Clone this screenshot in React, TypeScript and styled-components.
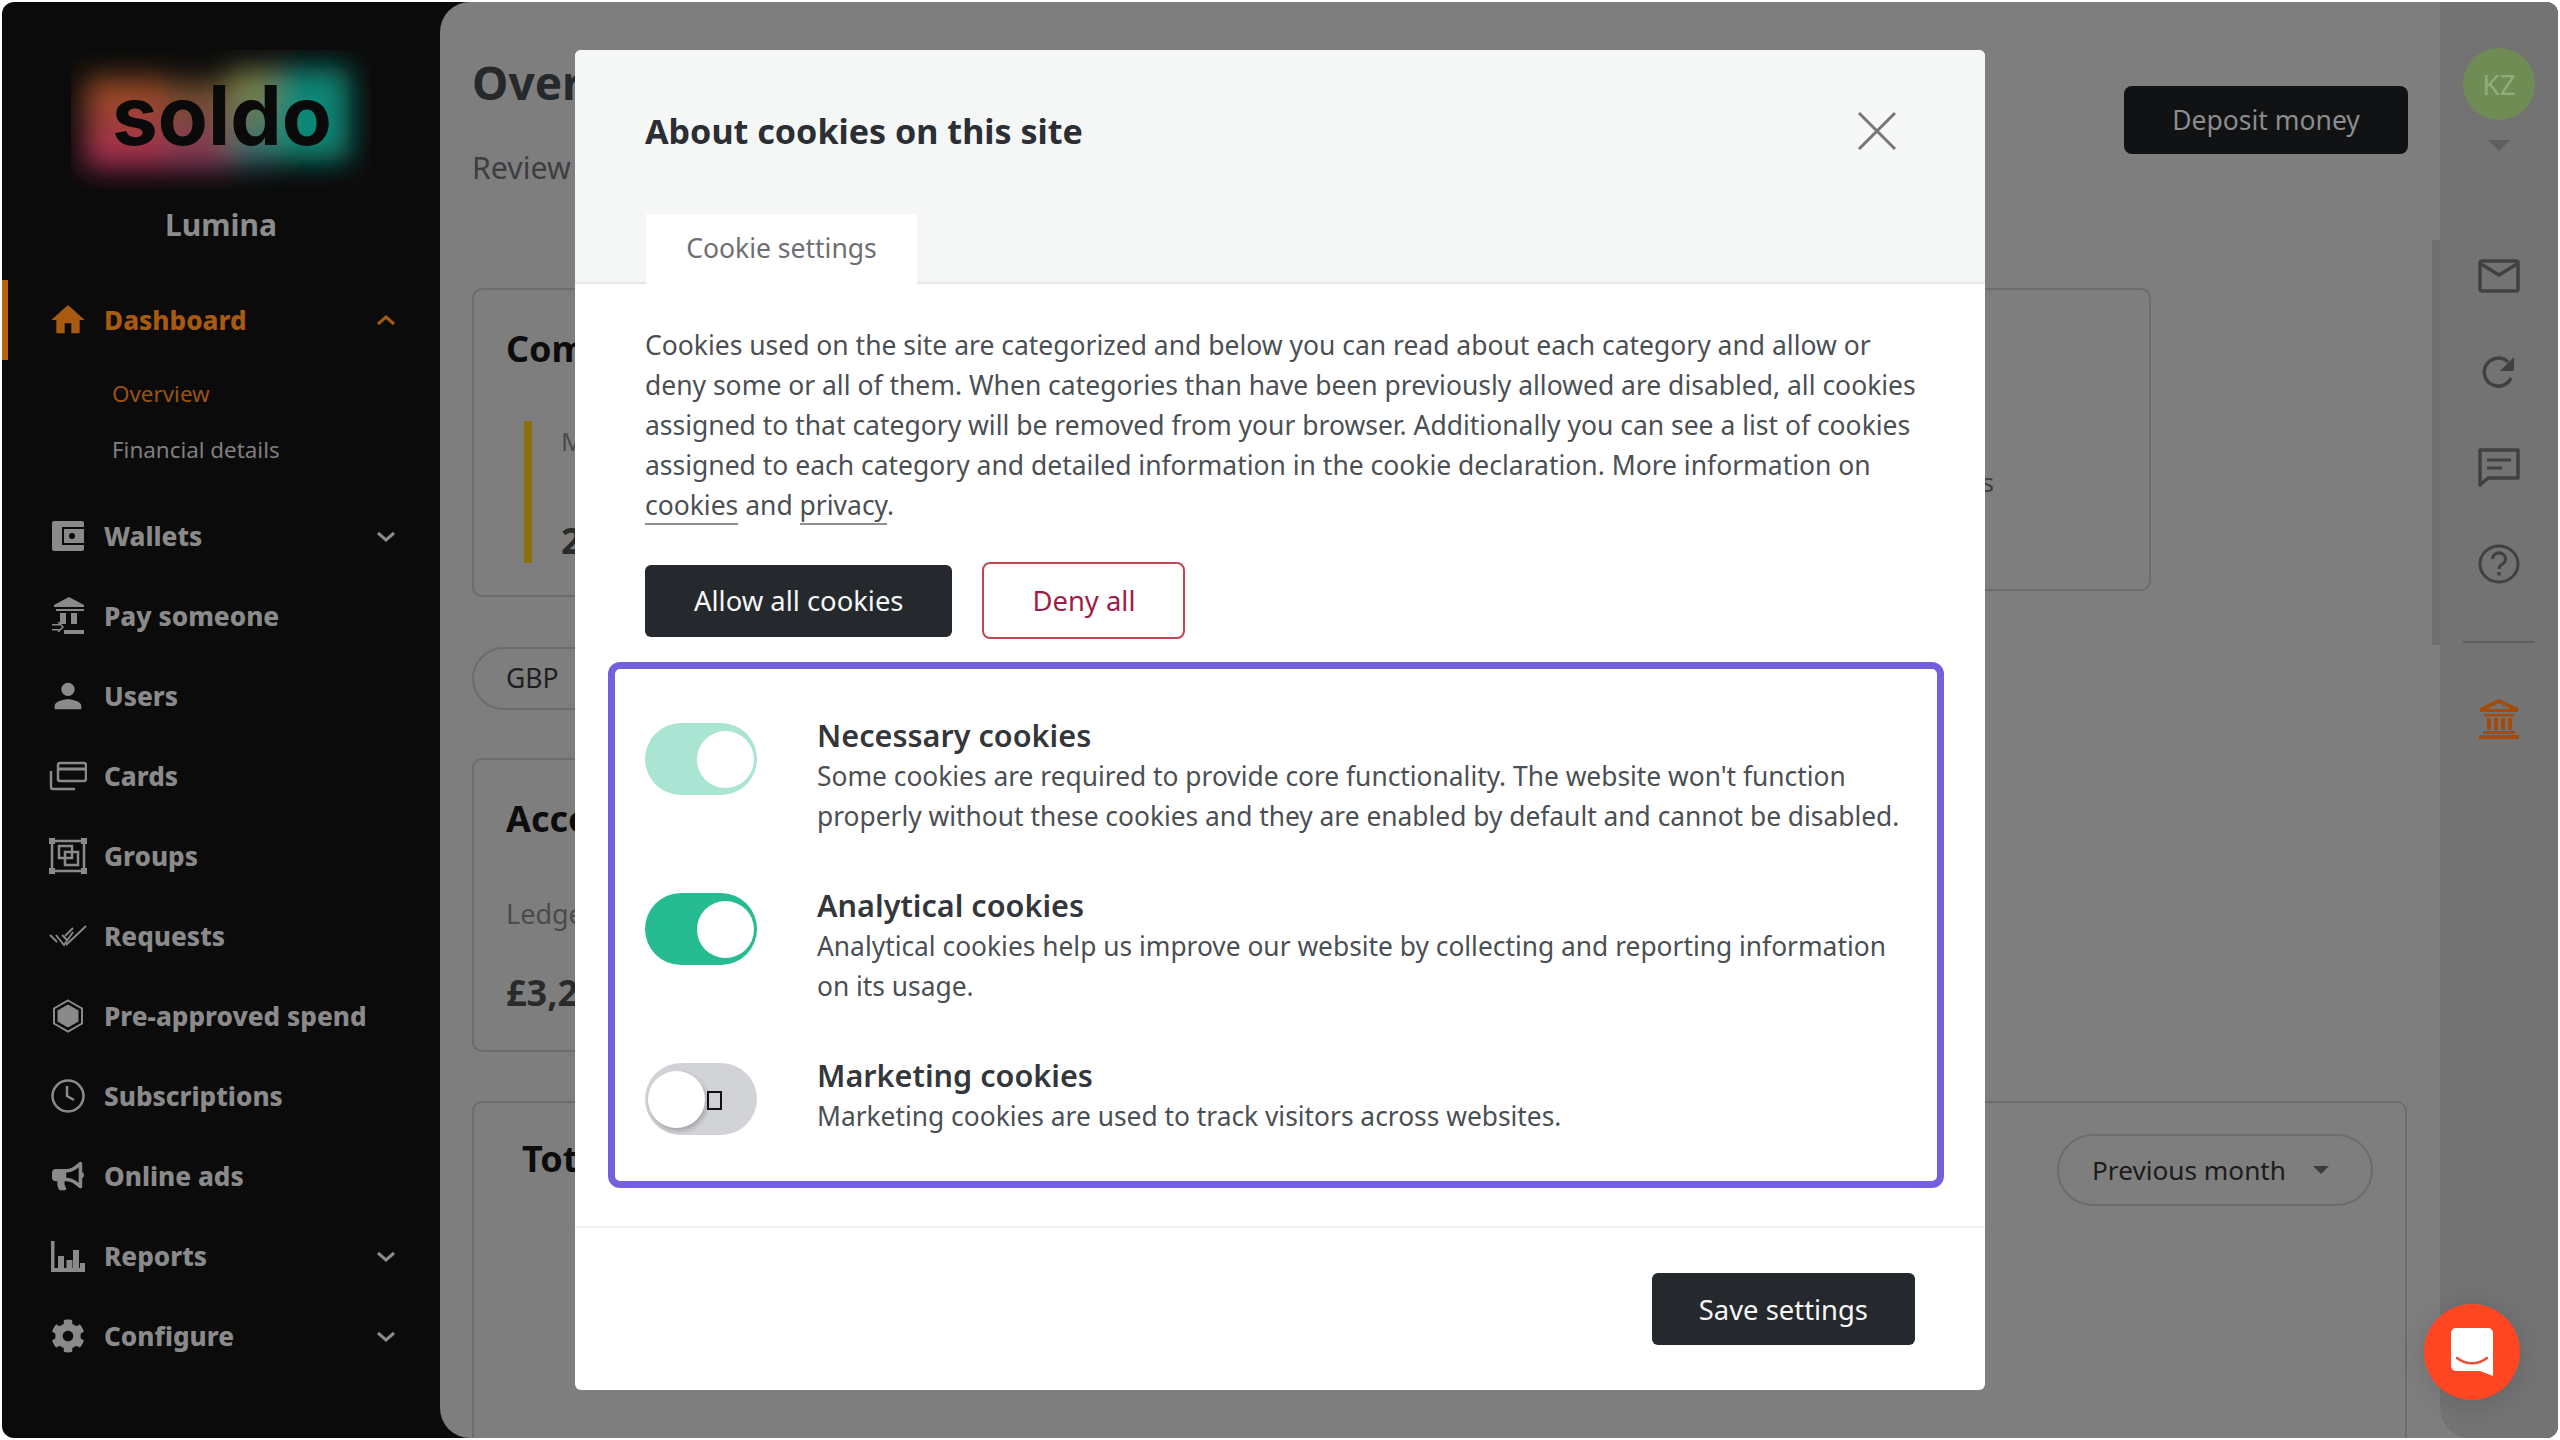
import React from 'react';
import styled, { createGlobalStyle } from 'styled-components';
import { MdHome, MdPerson } from 'react-icons/md';
import { FaBullhorn, FaCog } from 'react-icons/fa';

const GlobalStyle = createGlobalStyle`
  html, body { margin: 0; padding: 0; background: #fff; }
  * { box-sizing: border-box; }
  body { font-family: "Noto Sans", "Open Sans", sans-serif; }
`;

const Frame = styled.div`
  position: relative;
  display: flex;
  height: 1436px;
  width: 2556px;
  margin: 2px;
  border-radius: 12px;
  overflow: hidden;
  background: #0b0b0b;
`;

/* sidebar */
const Sidebar = styled.aside`
  width: 438px;
  flex: none;
  color: #8a8a8a;
`;

const Brand = styled.div`
  height: 278px;
  padding-top: 48px;
  display: flex;
  flex-direction: column;
  align-items: center;
`;

const Company = styled.div`
  margin-top: 15px;
  font-size: 30px;
  font-weight: 700;
  line-height: 40px;
  color: #8c8c8c;
`;

const NavRow = styled.div<{ $active?: boolean }>`
  height: 80px;
  display: flex;
  align-items: center;
  padding-left: 46px;
  font-size: 26.1px;
  font-weight: 800;
  color: ${({ $active }) => ($active ? '#a85a10' : '#8a8a8a')};
  border-left: 6px solid ${({ $active }) => ($active ? '#b5640f' : 'transparent')};
  border-radius: 0 5px 5px 0;
`;

const NavIcon = styled.span`
  width: 40px;
  height: 40px;
  flex: none;
  display: flex;
  align-items: center;
  justify-content: center;
  margin-left: -6px;
  margin-right: 16px;
  svg { display: block; }
`;

const NavLabel = styled.span`
  flex: 1;
`;

const Chevron = styled.svg`
  width: 24px;
  height: 24px;
  margin-right: 42px;
`;

const SubMenu = styled.div`
  padding: 6px 0 18px 110px;
`;

const SubItem = styled.div<{ $active?: boolean }>`
  height: 56px;
  line-height: 55px;
  font-size: 22.4px;
  color: ${({ $active }) => ($active ? '#9a5214' : '#7f7f7f')};
`;

/* main column */
const Workspace = styled.div`
  flex: 1;
  min-width: 0;
  display: flex;
  background: #7e7e7e;
  border-radius: 30px 0 0 30px;
`;

const Main = styled.main`
  flex: 1;
  min-width: 0;
  position: relative;
  padding: 50px 33px 0 32px;
`;

const PageHead = styled.header`
  display: flex;
  justify-content: space-between;
  height: 236px;
`;

const PageTitle = styled.h1`
  margin: 0;
  font-size: 46px;
  line-height: 60px;
  font-weight: 700;
  color: #26292c;
`;

const PageSub = styled.p`
  margin: 36px 0 0;
  font-size: 30.3px;
  line-height: 40px;
  color: #3c3f42;
`;

const DepositButton = styled.button`
  width: 284px;
  height: 68px;
  margin: 34px -1px 0 0;
  border: 0;
  border-radius: 8px;
  background: #101214;
  color: #8c8c8c;
  font: 400 26.5px "Noto Sans", sans-serif;
`;

const CardRow = styled.div`
  display: flex;
  align-items: flex-start;
  width: 1679px;
  gap: 30px;
`;

const Card = styled.section`
  border: 2px solid #6c6c6c;
  border-radius: 10px;
  padding: 0 32px;
`;

const CompanyCard = styled(Card)`
  width: 900px;
  height: 309px;
  padding-top: 34px;
`;

const SideCard = styled(Card)`
  flex: 1;
  height: 303px;
  padding: 172px 155px 0 0;
  text-align: right;
  font-size: 26px;
  line-height: 40px;
  color: #3c3f42;
`;

const CardTitle = styled.h2`
  margin: 0;
  font-size: 36px;
  line-height: 50px;
  font-weight: 700;
  color: #0c0c0c;
`;

const Metric = styled.div`
  display: flex;
  gap: 29px;
  margin: 47px 0 0 18px;
`;

const MetricBar = styled.div`
  width: 8px;
  height: 142px;
  background: #8a7010;
`;

const MetricLabel = styled.div`
  font-size: 26px;
  line-height: 40px;
  color: #4b4b4b;
`;

const MetricValue = styled.div`
  margin-top: 55px;
  font-size: 36px;
  line-height: 50px;
  font-weight: 700;
  color: #2a2a2a;
`;

const CurrencyPill = styled.div`
  width: 220px;
  height: 63px;
  margin-top: 50px;
  padding-left: 32px;
  border: 2px solid #6c6c6c;
  border-radius: 32px;
  font-size: 26.5px;
  line-height: 58px;
  color: #1f1f1f;
`;

const AccountCard = styled(Card)`
  width: 900px;
  height: 294px;
  margin-top: 48px;
  padding-top: 34px;
`;

const LedgerLabel = styled.div`
  margin-top: 50px;
  font-size: 27px;
  line-height: 40px;
  color: #4b4b4b;
`;

const LedgerValue = styled.div`
  margin-top: 34px;
  font-size: 36px;
  line-height: 50px;
  font-weight: 700;
  color: #2a2a2a;
`;

const TotalCard = styled(Card)`
  height: 400px;
  margin-top: 49px;
  padding: 31px 32px 0 48px;
  display: flex;
  justify-content: space-between;
  align-items: flex-start;
`;

const MonthPill = styled.div`
  display: flex;
  align-items: center;
  gap: 27px;
  height: 72px;
  width: 316px;
  padding-left: 33px;
  border: 2px solid #6c6c6c;
  border-radius: 36px;
  font-size: 26.2px;
  color: #1c1c1c;
`;

const Caret = styled.span<{ $color?: string; $size?: number }>`
  display: block;
  width: 0;
  height: 0;
  border-left: ${({ $size }) => $size || 8}px solid transparent;
  border-right: ${({ $size }) => $size || 8}px solid transparent;
  border-top: ${({ $size }) => $size || 8}px solid ${({ $color }) => $color || '#3c3c3c'};
`;

const ScrollThumb = styled.div`
  position: absolute;
  right: 0;
  top: 238px;
  width: 8px;
  height: 405px;
  background: #6f6f6f;
`;

/* right rail */
const Rail = styled.aside`
  width: 118px;
  flex: none;
  background: #737373;
  border-bottom-left-radius: 30px;
  padding-top: 46px;
  display: flex;
  flex-direction: column;
  align-items: center;
`;

const Avatar = styled.div`
  width: 72px;
  height: 72px;
  border-radius: 50%;
  background: #6f8c55;
  color: #93ab7d;
  font-size: 28px;
  line-height: 72px;
  text-align: center;
`;

const AvatarCaret = styled.div`
  margin: 20px 0 77px;
`;

const RailButton = styled.div`
  height: 96px;
  display: flex;
  align-items: center;
  justify-content: center;
  color: #414141;
`;

const RailDivider = styled.div`
  width: 72px;
  height: 2px;
  margin: 29px 0 28px;
  background: #5e5e5e;
`;

const ChatBubble = styled.div`
  position: absolute;
  right: 38px;
  bottom: 38px;
  width: 96px;
  height: 96px;
  border-radius: 50%;
  background: #ff4521;
  box-shadow: 0 4px 24px rgba(0, 0, 0, 0.12);
  display: flex;
  align-items: center;
  justify-content: center;
`;

/* cookie dialog */
const Overlay = styled.div`
  position: absolute;
  inset: 0;
  display: flex;
  align-items: center;
  justify-content: center;
`;

const Modal = styled.div`
  width: 1410px;
  height: 1340px;
  background: #fff;
  border-radius: 6px;
  color: #4a4f54;
`;

const ModalHead = styled.div`
  height: 234px;
  padding: 0 70px;
  background: #f5f6f6;
  border-bottom: 2px solid #e6e7e8;
  border-radius: 6px 6px 0 0;
  display: flex;
  flex-direction: column;
  justify-content: space-between;
`;

const TitleRow = styled.div`
  display: flex;
  justify-content: space-between;
  align-items: center;
  height: 162px;
  padding-right: 18px;
`;

const ModalTitle = styled.h2`
  margin: 0;
  font-size: 34.1px;
  font-weight: 700;
  color: #2b2f33;
`;

const Tab = styled.div`
  width: 271px;
  height: 70px;
  margin: 0 0 -2px 1px;
  background: #fff;
  font-size: 26.5px;
  line-height: 69px;
  text-align: center;
  color: #6c6f73;
`;

const ModalBody = styled.div`
  padding: 41px 70px 38px;
  border-bottom: 2px solid #eeeff0;
`;

const Intro = styled.p`
  margin: 0 -20px 0 0;
  font-size: 26.47px;
  line-height: 40px;
`;

const IntroLink = styled.a`
  color: inherit;
  text-decoration: none;
  border-bottom: 2px solid #8f8f8f;
`;

const ActionRow = styled.div`
  display: flex;
  align-items: center;
  gap: 30px;
  margin-top: 37px;
`;

const DarkButton = styled.button<{ $pad?: number }>`
  height: 72px;
  padding: 0 ${({ $pad }) => $pad || 47}px;
  border: 0;
  border-radius: 6px;
  background: #25292d;
  color: #f6f6f6;
  font: 400 27.4px "Noto Sans", sans-serif;
`;

const OutlineButton = styled.button`
  height: 77px;
  padding: 0 48px;
  border: 2px solid #c0474f;
  border-radius: 8px;
  background: #fff;
  color: #a01c44;
  font: 400 27.4px "Noto Sans", sans-serif;
`;

const CategoryBox = styled.div`
  width: 1336px;
  margin: 23px 0 0 -37px;
  padding: 46px 20px 45px 30px;
  border: 7px solid #7360dd;
  border-radius: 12px;
  display: flex;
  flex-direction: column;
  gap: 49px;
`;

const CategoryRow = styled.div`
  display: flex;
  gap: 60px;
`;

const Toggle = styled.div<{ $color: string; $on: boolean }>`
  width: 112px;
  height: 72px;
  flex: none;
  margin-top: 8px;
  padding: 0 3px;
  border-radius: 36px;
  background: ${({ $color }) => $color};
  display: flex;
  align-items: center;
  justify-content: ${({ $on }) => ($on ? 'flex-end' : 'flex-start')};
`;

const Knob = styled.div<{ $raised?: boolean }>`
  width: 57px;
  height: 57px;
  border-radius: 50%;
  background: #fff;
  box-shadow: ${({ $raised }) => ($raised ? '2px 3px 5px rgba(0, 0, 0, 0.22)' : 'none')};
`;

const MissingGlyph = styled.span`
  width: 15px;
  height: 19px;
  margin: 3px 0 0 2px;
  border: 2px solid #111;
`;

const CategoryName = styled.div`
  font-size: 30.6px;
  line-height: 40px;
  font-weight: 600;
  color: #33373b;
`;

const CategoryText = styled.div`
  font-size: 26.35px;
  line-height: 40px;
  padding-top: 1px;
`;

const ModalFoot = styled.div`
  height: 162px;
  padding: 0 70px;
  display: flex;
  align-items: center;
  justify-content: flex-end;
`;

const CloseIcon = styled.svg`
  width: 40px;
  height: 40px;
  color: #777;
`;

/* drawn icons */
const WalletIcon = () => (
  <svg width="34" height="32" viewBox="0 0 34 32">
    <rect x="1" y="1" width="32" height="30" rx="2" fill="currentColor" />
    <path d="M33 8H12v16h21" fill="none" stroke="#0b0b0b" strokeWidth="2" />
    <circle cx="21" cy="16" r="3" fill="#0b0b0b" />
  </svg>
);

const PayIcon = () => (
  <svg width="36" height="38" viewBox="0 0 36 38" fill="currentColor">
    <path d="M19 0l15 8v2H4V8z" />
    <path d="M6 12h28v2H6zM10 16h6v11h-6zM21 16h6v11h-6zM14 33h20v4H14z" />
    <path d="M2 27h8v1.500H2zM2 32h8v1.500H2z" />
    <path d="M8 25l5 5-5 5" fill="none" stroke="currentColor" strokeWidth="1.500" />
  </svg>
);

const CardsIcon = () => (
  <svg width="38" height="30" viewBox="0 0 38 30" fill="none" stroke="currentColor" strokeWidth="2.500">
    <rect x="9" y="2" width="28" height="18" rx="2" />
    <path d="M9 8h28" strokeWidth="3" />
    <path d="M2 10v16a2 2 0 0 0 2 2h22" />
  </svg>
);

const GroupsIcon = () => (
  <svg width="38" height="36" viewBox="0 0 38 36" fill="none" stroke="currentColor" strokeWidth="2.500">
    <rect x="3" y="3" width="32" height="30" />
    <rect x="10" y="8" width="13" height="12" />
    <rect x="16" y="14" width="13" height="13" />
    <g fill="currentColor" stroke="none">
      <rect x="0" y="0" width="6" height="6" />
      <rect x="32" y="0" width="6" height="6" />
      <rect x="0" y="30" width="6" height="6" />
      <rect x="32" y="30" width="6" height="6" />
    </g>
  </svg>
);

const RequestsIcon = () => (
  <svg width="38" height="24" viewBox="0 0 38 24" fill="none" stroke="currentColor" strokeWidth="1.800">
    <path d="M1 11l7 7" />
    <path d="M7 11l8 10 9-13" />
    <path d="M13 11l5 5M17 21L37 2M24 4l-8 8" />
  </svg>
);

const HexagonIcon = () => (
  <svg width="32" height="34" viewBox="0 0 32 34">
    <path d="M16 1.500l14 8v15l-14 8-14-8v-15z" fill="none" stroke="currentColor" strokeWidth="2" />
    <path d="M16 5.500l10.500 6v11L16 28.500l-10.500-6v-11z" fill="currentColor" />
  </svg>
);

const ClockIcon = () => (
  <svg width="36" height="36" viewBox="0 0 36 36" fill="none" stroke="currentColor" strokeWidth="2.500">
    <circle cx="18" cy="18" r="15.500" />
    <path d="M17 8v10l7 4" />
  </svg>
);

const ChartIcon = () => (
  <svg width="34" height="31" viewBox="0 0 34 31" fill="currentColor">
    <path d="M0 0h3.500v27H34v4H0z" />
    <path d="M7 15h6v12H7zM15.500 19h6v8h-6zM22 9h6v18h-6zM29 22h5v5h-5z" />
  </svg>
);

const MailIcon = () => (
  <svg width="42" height="34" viewBox="0 0 42 34" fill="none" stroke="currentColor" strokeWidth="3.500" strokeLinejoin="round">
    <rect x="2" y="2" width="38" height="30" rx="2" />
    <path d="M3 5l18 11L39 5" />
  </svg>
);

const RefreshIcon = () => (
  <svg width="36" height="36" viewBox="0 0 36 36">
    <path d="M30 24a14 14 0 1 1-3-16" fill="none" stroke="currentColor" strokeWidth="3.500" />
    <path d="M33 3v14H19z" fill="currentColor" />
  </svg>
);

const MessageIcon = () => (
  <svg width="42" height="40" viewBox="0 0 42 40" fill="none" stroke="currentColor" strokeWidth="3.500" strokeLinejoin="round">
    <path d="M2 2h38v28H10l-8 7z" />
    <path d="M9 12h24M9 20h15" strokeWidth="3" />
  </svg>
);

const HelpIcon = () => (
  <svg width="42" height="40" viewBox="0 0 42 40" fill="none" stroke="currentColor" strokeWidth="3">
    <ellipse cx="21" cy="20" rx="19" ry="18" />
    <path d="M14.500 15a6.500 6 0 1 1 10 5c-2.500 1.500-3.500 3-3.500 5" strokeWidth="3" />
    <path d="M21 28v3.500" strokeWidth="3.500" />
  </svg>
);

const BankIcon = () => (
  <svg width="42" height="40" viewBox="0 0 42 40" fill="#a64a0a">
    <path d="M21 0L40 9v4H2V9zM21 4L9 10h24z" fillRule="evenodd" />
    <path d="M6 15h30v2.500H6zM9 19h4v12H9zM16 19h4v12h-4zM23 19h4v12h-4zM30 19h4v12h-4zM5 32h32v3H5zM1 36h40v4H1z" />
  </svg>
);

const ChatGlyph = () => (
  <svg width="44" height="50" viewBox="0 0 44 50">
    <path d="M6 1h32a5 5 0 0 1 5 5v43l-13-5H6a5 5 0 0 1-5-5V6a5 5 0 0 1 5-5z" fill="#fff" />
    <path d="M7 31c9 7 21 7 30 0" fill="none" stroke="#e4503a" strokeWidth="2.500" strokeLinecap="round" />
  </svg>
);

const SoldoLogo = () => (
  <svg width="300" height="140" viewBox="0 0 300 140">
    <defs>
      <filter id="glow" x="-30%" y="-30%" width="160%" height="160%">
        <feGaussianBlur stdDeviation="14" />
      </filter>
      <linearGradient id="c1" x1="0" y1="0" x2="0" y2="1">
        <stop offset="0" stopColor="#96501c" />
        <stop offset="1" stopColor="#a82a58" />
      </linearGradient>
      <linearGradient id="c2" x1="0" y1="0" x2="0" y2="1">
        <stop offset="0" stopColor="#6e5226" />
        <stop offset="1" stopColor="#8c3560" />
      </linearGradient>
      <linearGradient id="c3" x1="0" y1="0" x2="0" y2="1">
        <stop offset="0" stopColor="#85853f" />
        <stop offset="1" stopColor="#2f6a78" />
      </linearGradient>
      <linearGradient id="c4" x1="0" y1="0" x2="0" y2="1">
        <stop offset="0" stopColor="#0a8574" />
        <stop offset="1" stopColor="#0c8a78" />
      </linearGradient>
    </defs>
    <g filter="url(#glow)">
      <rect x="14" y="28" width="80" height="90" fill="url(#c1)" />
      <rect x="94" y="32" width="64" height="86" fill="url(#c2)" />
      <rect x="158" y="20" width="46" height="94" fill="url(#c3)" />
      <rect x="204" y="18" width="74" height="92" fill="url(#c4)" />
    </g>
    <text x="41" y="95" textLength="220" lengthAdjust="spacingAndGlyphs" fontFamily="Inter, sans-serif" fontWeight="700" fontSize="82" fill="#0a0a0a">
      soldo
    </text>
  </svg>
);

const ChevronIcon = ({ up }: { up?: boolean }) => (
  <Chevron viewBox="0 0 24 24" fill="none" stroke="currentColor" strokeWidth="3">
    <path d={up ? 'M4 16l8-7 8 7' : 'M4 9l8 7 8-7'} />
  </Chevron>
);

const navItems = [
  { label: 'Wallets', icon: <WalletIcon />, more: true },
  { label: 'Pay someone', icon: <PayIcon /> },
  { label: 'Users', icon: <MdPerson size={40} /> },
  { label: 'Cards', icon: <CardsIcon /> },
  { label: 'Groups', icon: <GroupsIcon /> },
  { label: 'Requests', icon: <RequestsIcon /> },
  { label: 'Pre-approved spend', icon: <HexagonIcon /> },
  { label: 'Subscriptions', icon: <ClockIcon /> },
  { label: 'Online ads', icon: <FaBullhorn size={32} /> },
  { label: 'Reports', icon: <ChartIcon />, more: true },
  { label: 'Configure', icon: <FaCog size={34} />, more: true },
];

const categories = [
  {
    name: 'Necessary cookies',
    text: "Some cookies are required to provide core functionality. The website won't function properly without these cookies and they are enabled by default and cannot be disabled.",
    color: '#aae5d3',
    on: true,
  },
  {
    name: 'Analytical cookies',
    text: 'Analytical cookies help us improve our website by collecting and reporting information on its usage.',
    color: '#26bb91',
    on: true,
  },
  {
    name: 'Marketing cookies',
    text: 'Marketing cookies are used to track visitors across websites.',
    color: '#d2d3d7',
    on: false,
  },
];

export default function App() {
  return (
    <Frame>
      <GlobalStyle />
      <Sidebar>
        <Brand>
          <SoldoLogo />
          <Company>Lumina</Company>
        </Brand>
        <NavRow $active>
          <NavIcon>
            <MdHome size={42} />
          </NavIcon>
          <NavLabel>Dashboard</NavLabel>
          <ChevronIcon up />
        </NavRow>
        <SubMenu>
          <SubItem $active>Overview</SubItem>
          <SubItem>Financial details</SubItem>
        </SubMenu>
        {navItems.map(item => (
          <NavRow key={item.label}>
            <NavIcon>{item.icon}</NavIcon>
            <NavLabel>{item.label}</NavLabel>
            {item.more && <ChevronIcon />}
          </NavRow>
        ))}
      </Sidebar>

      <Workspace>
        <Main>
          <PageHead>
            <div>
              <PageTitle>Overview</PageTitle>
              <PageSub>Review your account</PageSub>
            </div>
            <DepositButton>Deposit money</DepositButton>
          </PageHead>
          <CardRow>
            <CompanyCard>
              <CardTitle>Company</CardTitle>
              <Metric>
                <MetricBar />
                <div>
                  <MetricLabel>Monthly spend</MetricLabel>
                  <MetricValue>2</MetricValue>
                </div>
              </Metric>
            </CompanyCard>
            <SideCard>Subscriptions</SideCard>
          </CardRow>
          <CurrencyPill>GBP</CurrencyPill>
          <AccountCard>
            <CardTitle>Account</CardTitle>
            <LedgerLabel>Ledger balance</LedgerLabel>
            <LedgerValue>£3,2</LedgerValue>
          </AccountCard>
          <TotalCard>
            <CardTitle>Total</CardTitle>
            <MonthPill>
              Previous month
              <Caret />
            </MonthPill>
          </TotalCard>
          <ScrollThumb />
        </Main>

        <Rail>
          <Avatar>KZ</Avatar>
          <AvatarCaret>
            <Caret $color="#5f5f5f" $size={11} />
          </AvatarCaret>
          <RailButton>
            <MailIcon />
          </RailButton>
          <RailButton>
            <RefreshIcon />
          </RailButton>
          <RailButton>
            <MessageIcon />
          </RailButton>
          <RailButton>
            <HelpIcon />
          </RailButton>
          <RailDivider />
          <RailButton>
            <BankIcon />
          </RailButton>
        </Rail>
      </Workspace>

      <Overlay>
        <Modal>
          <ModalHead>
            <TitleRow>
              <ModalTitle>About cookies on this site</ModalTitle>
              <CloseIcon viewBox="0 0 40 40" fill="none" stroke="currentColor" strokeWidth="3">
                <path d="M2 2l36 36M38 2L2 38" />
              </CloseIcon>
            </TitleRow>
            <Tab>Cookie settings</Tab>
          </ModalHead>
          <ModalBody>
            <Intro>
              Cookies used on the site are categorized and below you can read about each category and allow or deny some or all of them. When categories than have been previously allowed are disabled, all cookies assigned to that category will be removed from your browser. Additionally you can see a list of cookies assigned to each category and detailed information in the cookie declaration. More information on{' '}
              <IntroLink>cookies</IntroLink> and <IntroLink>privacy</IntroLink>.
            </Intro>
            <ActionRow>
              <DarkButton $pad={49}>Allow all cookies</DarkButton>
              <OutlineButton>Deny all</OutlineButton>
            </ActionRow>
            <CategoryBox>
              {categories.map(cat => (
                <CategoryRow key={cat.name}>
                  <Toggle $color={cat.color} $on={cat.on}>
                    <Knob $raised={!cat.on} />
                    {!cat.on && <MissingGlyph />}
                  </Toggle>
                  <div>
                    <CategoryName>{cat.name}</CategoryName>
                    <CategoryText>{cat.text}</CategoryText>
                  </div>
                </CategoryRow>
              ))}
            </CategoryBox>
          </ModalBody>
          <ModalFoot>
            <DarkButton>Save settings</DarkButton>
          </ModalFoot>
        </Modal>
      </Overlay>

      <ChatBubble>
        <ChatGlyph />
      </ChatBubble>
    </Frame>
  );
}
